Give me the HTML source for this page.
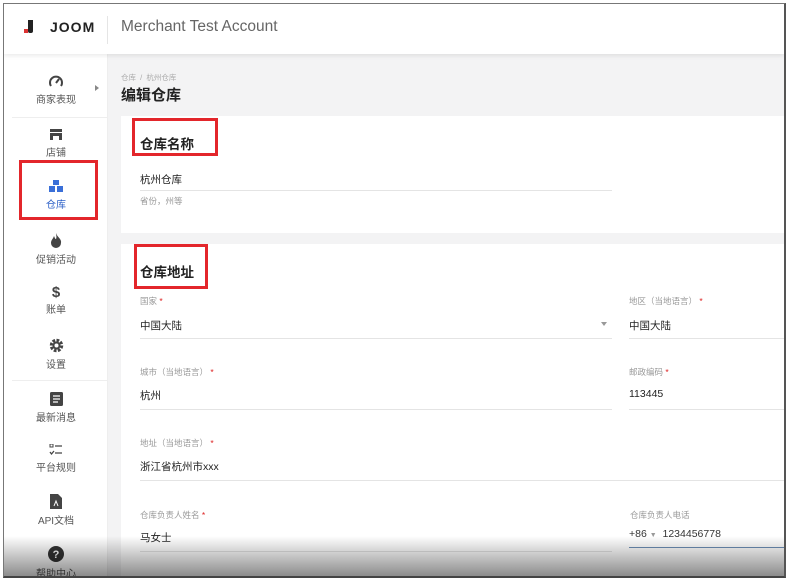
<!DOCTYPE html>
<html><head><meta charset="utf-8"><style>
*{margin:0;padding:0;box-sizing:border-box}
body{width:789px;height:582px;background:#fff;font-family:"Liberation Sans","Noto Sans CJK SC",sans-serif;position:relative;overflow:hidden;color:#222}
.frame{position:absolute;left:3px;top:3px;width:783px;height:575px;border:1px solid #777;border-right:2px solid #555;border-bottom:2px solid #444;overflow:hidden;background:#f3f3f4}
.hdr{position:absolute;left:0;top:0;width:100%;height:50px;background:#fff;box-shadow:0 2px 4px rgba(0,0,0,.08);z-index:2}
.side{position:absolute;left:0;top:50px;width:104px;bottom:0;background:#fff;border-right:1px solid #eee}
.it{position:absolute;left:0;width:104px;text-align:center;font-size:10px;color:#555}
.it svg{display:block;margin:0 auto 3px}
.card{position:absolute;left:117px;right:0;background:#fff}
.lbl{position:absolute;font-size:8.5px;color:#999}
.lbl b{color:#d22;font-weight:normal}
.val{position:absolute;font-size:10.5px;color:#222}
.ln{position:absolute;height:1px;background:#e4e4e4}
.red{position:absolute;border:3px solid #e3262b;z-index:3}
</style></head><body>
<div class="frame">
<div class="hdr">
 <div style="position:absolute;left:24px;top:16px;width:5px;height:13px;background:#222;border-radius:0 0 2px 2px"></div>
 <div style="position:absolute;left:20px;top:25px;width:4px;height:4px;background:#d33"></div>
 <div style="position:absolute;left:46px;top:15px;font-size:14px;font-weight:bold;letter-spacing:1px;color:#222">JOOM</div>
 <div style="position:absolute;left:103px;top:12px;width:1px;height:28px;background:#e5e5e5"></div>
 <div style="position:absolute;left:117px;top:14px;font-size:15.5px;color:#666">Merchant Test Account</div>
</div>
<div class="side">
 <div class="it" style="top:20px"><svg width="16" height="14" viewBox="0 0 16 14"><path d="M3 12A6 6 0 1 1 13 12" fill="none" stroke="#444" stroke-width="2"/><path d="M8 9L11 5" stroke="#444" stroke-width="2"/></svg>商家表现</div>
 <div style="position:absolute;left:91px;top:31px;border-left:4px solid #888;border-top:3px solid transparent;border-bottom:3px solid transparent"></div>
 <div style="position:absolute;left:8px;top:63px;width:96px;height:1px;background:#eee"></div>
 <div class="it" style="top:74px"><svg width="14" height="13" viewBox="0 0 14 13"><rect x="1" y="1" width="12" height="3" fill="#444"/><rect x="1" y="5" width="12" height="7" fill="#444"/><rect x="4" y="8" width="6" height="4" fill="#fff"/></svg>店铺</div>
 <div class="it" style="top:125px;color:#2f62c8"><svg width="14" height="14" viewBox="0 0 14 14"><rect x="4" y="1" width="6" height="5" fill="#3a6fd8"/><rect x="0" y="7" width="6" height="6" fill="#3a6fd8"/><rect x="8" y="7" width="6" height="6" fill="#3a6fd8"/></svg>仓库</div>
 <div class="it" style="top:179px"><svg width="12" height="15" viewBox="0 0 12 15"><path d="M6 0C7 4 12 6 11 10A5 5 0 0 1 1 10C1 7 3 6 4 3C5 5 5 6 6 6C7 4 6 2 6 0Z" fill="#444"/></svg>促销活动</div>
 <div class="it" style="top:231px;"><div style="font-size:15px;font-weight:bold;color:#444;line-height:16px">$</div>账单</div>
 <div class="it" style="top:284px"><svg width="15" height="15" viewBox="0 0 15 15"><circle cx="7.5" cy="7.5" r="5" fill="none" stroke="#444" stroke-width="3.5" stroke-dasharray="2.6 1.3"/><circle cx="7.5" cy="7.5" r="4" fill="#444"/><circle cx="7.5" cy="7.5" r="2" fill="#fff"/></svg>设置</div>
 <div style="position:absolute;left:8px;top:326px;width:96px;height:1px;background:#eee"></div>
 <div class="it" style="top:338px"><svg width="13" height="14" viewBox="0 0 13 14"><rect x="0" y="0" width="13" height="14" rx="1.5" fill="#444"/><path d="M3 4H10M3 7H10M3 10H8" stroke="#fff" stroke-width="1.3"/></svg>最新消息</div>
 <div class="it" style="top:390px"><svg width="14" height="12" viewBox="0 0 14 12"><rect x="1" y="0" width="3" height="3" fill="none" stroke="#444"/><path d="M6 2H13M6 9H13M1 8L2.5 10L5 7" stroke="#444" stroke-width="1.3" fill="none"/></svg>平台规则</div>
 <div class="it" style="top:440px"><svg width="12" height="15" viewBox="0 0 12 15"><path d="M0 0H8L12 4V15H0Z" fill="#444"/><path d="M4 12L6 7L8 12" stroke="#fff" fill="none"/></svg>API文档</div>
 <div class="it" style="top:492px"><svg width="16" height="16" viewBox="0 0 16 16"><circle cx="8" cy="8" r="8" fill="#333"/><text x="8" y="12" font-size="11" font-weight="bold" fill="#fff" text-anchor="middle" font-family="Liberation Sans">?</text></svg>帮助中心</div>
</div>
<div class="red" style="left:15px;top:156px;width:79px;height:60px"></div>
<div style="position:absolute;left:117px;top:68px;font-size:7.5px;color:#aaa">仓库 &nbsp;/&nbsp; 杭州仓库</div>
<div style="position:absolute;left:117px;top:80px;font-size:15px;font-weight:bold;color:#222">编辑仓库</div>
<div class="card" style="top:112px;height:117px"></div>
<div class="card" style="top:240px;height:340px"></div>
<div style="position:absolute;left:136px;top:129px;font-size:13.5px;font-weight:bold">仓库名称</div>
<div class="red" style="left:128px;top:114px;width:86px;height:38px"></div>
<div class="val" style="left:136px;top:168px">杭州仓库</div>
<div class="ln" style="left:136px;top:186px;width:472px"></div>
<div class="lbl" style="left:136px;top:191px">省份，州等</div>
<div style="position:absolute;left:136px;top:257px;font-size:13.5px;font-weight:bold">仓库地址</div>
<div class="red" style="left:130px;top:240px;width:74px;height:45px"></div>
<div class="lbl" style="left:136px;top:291px">国家 <b>*</b></div>
<div class="val" style="left:136px;top:314px">中国大陆</div>
<div style="position:absolute;left:597px;top:318px;border-top:4px solid #999;border-left:3px solid transparent;border-right:3px solid transparent"></div>
<div class="ln" style="left:136px;top:334px;width:472px"></div>
<div class="lbl" style="left:625px;top:291px">地区（当地语言） <b>*</b></div>
<div class="val" style="left:625px;top:314px">中国大陆</div>
<div class="ln" style="left:625px;top:334px;width:160px"></div>
<div class="lbl" style="left:136px;top:362px">城市（当地语言） <b>*</b></div>
<div class="val" style="left:136px;top:384px">杭州</div>
<div class="ln" style="left:136px;top:405px;width:472px"></div>
<div class="lbl" style="left:625px;top:362px">邮政编码 <b>*</b></div>
<div class="val" style="left:625px;top:384px">113445</div>
<div class="ln" style="left:625px;top:405px;width:160px"></div>
<div class="lbl" style="left:136px;top:433px">地址（当地语言） <b>*</b></div>
<div class="val" style="left:136px;top:455px">浙江省杭州市xxx</div>
<div class="ln" style="left:136px;top:476px;width:650px"></div>
<div class="lbl" style="left:136px;top:505px">仓库负责人姓名 <b>*</b></div>
<div class="val" style="left:136px;top:526px">马女士</div>
<div class="ln" style="left:136px;top:547px;width:472px"></div>
<div class="lbl" style="left:626px;top:505px">仓库负责人电话</div>
<div class="val" style="left:625px;top:524px;color:#333">+86 <span style="font-size:7px;color:#999">▼</span>&nbsp; 1234456778</div>
<div style="position:absolute;left:625px;top:543px;width:160px;height:1px;background:#6d8fb5"></div>
<div style="position:absolute;left:0;right:0;top:532px;bottom:0;background:linear-gradient(rgba(0,0,0,0),rgba(0,0,0,.45));z-index:5"></div>
</div>
</body></html>
